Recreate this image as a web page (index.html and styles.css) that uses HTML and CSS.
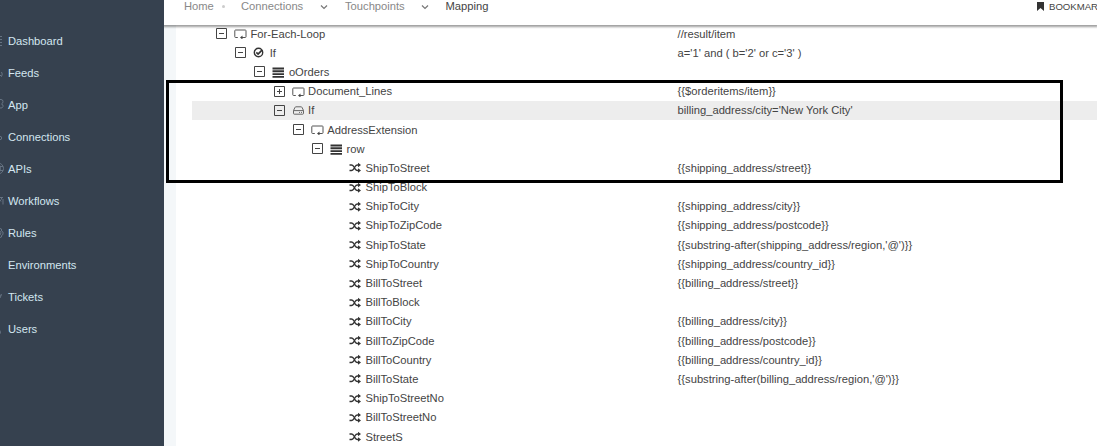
FILE: index.html
```
<!DOCTYPE html>
<html lang="en">
<head>
<meta charset="utf-8">
<title>Mapping</title>
<link rel="stylesheet" href="styles.css">
</head>
<body>
<svg class="defs" width="0" height="0">
  <symbol id="minus" viewBox="0 0 11 11"><path d="M.5.5h10v10H.5zM3 5.5h5" fill="none" stroke="currentColor"/></symbol>
  <symbol id="plus" viewBox="0 0 11 11"><path d="M.5.5h10v10H.5zM3 5.5h5M5.500 3v5" fill="none" stroke="currentColor"/></symbol>
  <symbol id="loop" viewBox="0 0 13 11"><path d="M3.800 9.500H1.500Q.8 9.500.8 8.800V2.700Q.8 2 1.500 2h9.800Q12 2 12 2.700v6.100Q12 9.500 11.300 9.500H7" fill="none" stroke="#555"/><path d="M8.500 7.500v4L6 9.500z" fill="#444"/></symbol>
  <symbol id="check" viewBox="0 0 13 11"><circle cx="5.500" cy="5.500" r="4.200" fill="none" stroke="currentColor" stroke-width="1.400"/><path d="M3.300 5.400l1.800 1.700 3.900-4" fill="none" stroke="currentColor" stroke-width="1.700"/></symbol>
  <symbol id="bars" viewBox="0 0 13 12"><path d="M.5 2.500h11.500M.5 5.300h11.500M.5 8.100h11.500M.5 10.900h11.500" stroke="currentColor" stroke-width="1.900"/></symbol>
  <symbol id="drive" viewBox="0 0 13 11"><path d="M1.500 5.500L3 2.400Q3.200 1.800 4 1.800h5q.8 0 1 .6l1.500 3.100v2.800q0 .9-.7.900H2.200q-.7 0-.7-.9zM1.500 5.600h10M7 7.400h1M9 7.400h1" fill="none" stroke="#666"/></symbol>
  <symbol id="shuffle" viewBox="0 0 13 11"><path d="M.5 3h2Q3.700 3 4.600 4.400l1.600 2.600Q7 8.500 8.500 8.500h1.700M.5 8.500h2Q3.700 8.500 4.600 7.100l1.600-2.600Q7 3 8.500 3h1.700" fill="none" stroke="currentColor" stroke-width="1.400"/><path d="M9 .7l3 2.300-3 2.300zM9 6.200l3 2.300-3 2.300z" fill="currentColor"/></symbol>
</svg>
<div class="app">
  <nav class="sidebar">
    <a class="nav-item"><svg class="nav-icon" viewBox="0 0 4 12"><path d="M0 1.500h2M0 4.500h2M0 7.500h2M0 10.500h2"/></svg>Dashboard</a>
    <a class="nav-item"><svg class="nav-icon" viewBox="0 0 4 12"><path d="M0 8l1.500 1.500Q3 7 1.500 5"/></svg>Feeds</a>
    <a class="nav-item"><svg class="nav-icon" viewBox="0 0 4 12"><path d="M0 .5h1Q3 .5 3 2.500T1.500 5Q3.500 5.500 3 7.500T0 9"/></svg>App</a>
    <a class="nav-item"><svg class="nav-icon" viewBox="0 0 4 12"><circle cx="0" cy="7" r="1.700"/></svg>Connections</a>
    <a class="nav-item"><svg class="nav-icon" viewBox="0 0 4 12"><path d="M-2 0A5.500 5.500 0 0 1-2 11M-2 0Q3 5.500-2 11M-2 3.500h5M-2 7.500h5"/></svg>APIs</a>
    <a class="nav-item"><svg class="nav-icon" viewBox="0 0 4 12"><path d="M0 2.500h3M1.500 2.500v2M3 4v5.500M0 4.500l1 2"/></svg>Workflows</a>
    <a class="nav-item"><svg class="nav-icon" viewBox="0 0 4 12"><path d="M0 1.500l1.500.5v2L3 5v2.500L1.500 8.500V10L0 10.500M0 4q2 1.500 0 4"/></svg>Rules</a>
    <a class="nav-item"><svg class="nav-icon" viewBox="0 0 4 12"></svg>Environments</a>
    <a class="nav-item"><svg class="nav-icon" viewBox="0 0 4 12"><path d="M0 4.500l1.500-1L0 7"/></svg>Tickets</a>
    <a class="nav-item"><svg class="nav-icon" viewBox="0 0 4 12"><path d="M-1 6.500q1.500 1 1.500 4"/></svg>Users</a>
  </nav>
  <main class="main">
    <header class="topbar">
      <span class="crumb home">Home</span><i class="dot"></i>
      <span class="crumb connections">Connections</span><svg class="chevron" viewBox="0 0 8 6"><path d="M1 1.500l3 3 3-3"/></svg>
      <span class="crumb touchpoints">Touchpoints</span><svg class="chevron" viewBox="0 0 8 6"><path d="M1 1.500l3 3 3-3"/></svg>
      <span class="crumb current">Mapping</span>
      <span class="bookmark"><svg viewBox="0 0 7 9"><path d="M0 0h7v9L3.500 6 0 9z"/></svg>BOOKMARKS</span>
    </header>
    <section class="panel">
      <div class="row d0"><div class="node"><svg class="toggle"><use href="#minus"/></svg><svg class="icon"><use href="#loop"/></svg><span>For-Each-Loop</span></div><div>//result/item</div></div>
      <div class="row d1"><div class="node"><svg class="toggle"><use href="#minus"/></svg><svg class="icon"><use href="#check"/></svg><span>If</span></div><div>a='1' and ( b='2' or c='3' )</div></div>
      <div class="row d2"><div class="node"><svg class="toggle"><use href="#minus"/></svg><svg class="icon bars"><use href="#bars"/></svg><span>oOrders</span></div></div>
      <div class="row d3"><div class="node"><svg class="toggle"><use href="#plus"/></svg><svg class="icon"><use href="#loop"/></svg><span>Document_Lines</span></div><div>{{$orderitems/item}}</div></div>
      <div class="row d3 selected"><div class="node"><svg class="toggle"><use href="#minus"/></svg><svg class="icon"><use href="#drive"/></svg><span>If</span></div><div>billing_address/city='New York City'</div></div>
      <div class="row d4"><div class="node"><svg class="toggle"><use href="#minus"/></svg><svg class="icon"><use href="#loop"/></svg><span>AddressExtension</span></div></div>
      <div class="row d5"><div class="node"><svg class="toggle"><use href="#minus"/></svg><svg class="icon bars"><use href="#bars"/></svg><span>row</span></div></div>
      <div class="row leaf"><div class="node"><svg class="icon"><use href="#shuffle"/></svg><span>ShipToStreet</span></div><div>{{shipping_address/street}}</div></div>
      <div class="row leaf"><div class="node"><svg class="icon"><use href="#shuffle"/></svg><span>ShipToBlock</span></div></div>
      <div class="row leaf"><div class="node"><svg class="icon"><use href="#shuffle"/></svg><span>ShipToCity</span></div><div>{{shipping_address/city}}</div></div>
      <div class="row leaf"><div class="node"><svg class="icon"><use href="#shuffle"/></svg><span>ShipToZipCode</span></div><div>{{shipping_address/postcode}}</div></div>
      <div class="row leaf"><div class="node"><svg class="icon"><use href="#shuffle"/></svg><span>ShipToState</span></div><div>{{substring-after(shipping_address/region,'@')}}</div></div>
      <div class="row leaf"><div class="node"><svg class="icon"><use href="#shuffle"/></svg><span>ShipToCountry</span></div><div>{{shipping_address/country_id}}</div></div>
      <div class="row leaf"><div class="node"><svg class="icon"><use href="#shuffle"/></svg><span>BillToStreet</span></div><div>{{billing_address/street}}</div></div>
      <div class="row leaf"><div class="node"><svg class="icon"><use href="#shuffle"/></svg><span>BillToBlock</span></div></div>
      <div class="row leaf"><div class="node"><svg class="icon"><use href="#shuffle"/></svg><span>BillToCity</span></div><div>{{billing_address/city}}</div></div>
      <div class="row leaf"><div class="node"><svg class="icon"><use href="#shuffle"/></svg><span>BillToZipCode</span></div><div>{{billing_address/postcode}}</div></div>
      <div class="row leaf"><div class="node"><svg class="icon"><use href="#shuffle"/></svg><span>BillToCountry</span></div><div>{{billing_address/country_id}}</div></div>
      <div class="row leaf"><div class="node"><svg class="icon"><use href="#shuffle"/></svg><span>BillToState</span></div><div>{{substring-after(billing_address/region,'@')}}</div></div>
      <div class="row leaf"><div class="node"><svg class="icon"><use href="#shuffle"/></svg><span>ShipToStreetNo</span></div></div>
      <div class="row leaf"><div class="node"><svg class="icon"><use href="#shuffle"/></svg><span>BillToStreetNo</span></div></div>
      <div class="row leaf"><div class="node"><svg class="icon"><use href="#shuffle"/></svg><span>StreetS</span></div></div>
    </section>
  </main>
  <div class="highlight-frame"></div>
</div>
</body>
</html>
```
FILE: styles.css
```
* { box-sizing: border-box; }
body {
  margin: 0;
  font-family: "Liberation Sans", Arial, sans-serif;
  font-size: 11.2px;
  color: #444;
}
.defs { display: none; }
.app {
  position: relative;
  display: flex;
  height: 446px;
  overflow: hidden;
}
.sidebar {
  position: relative;
  z-index: 1;
  width: 164px;
  flex: none;
  padding-top: 25px;
  background: #36414f;
}
.nav-item {
  display: flex;
  align-items: center;
  height: 32px;
  color: #d3e6ef;
}
.nav-icon {
  width: 4px;
  height: 12px;
  margin-right: 4px;
  fill: none;
  stroke: #667382;
}
.main {
  flex: 1;
  min-width: 0;
  display: flex;
  flex-direction: column;
  background: #f4f7f9;
}
.topbar {
  position: relative;
  flex: none;
  display: flex;
  align-items: center;
  height: 25px;
  padding: 0 0 13px 20px;
  background: #fff;
  box-shadow: 0 1px 2px 1px rgba(0, 0, 0, .38);
  color: #888;
  white-space: nowrap;
}
.home { width: 38px; }
.dot {
  width: 3px;
  height: 3px;
  border-radius: 50%;
  background: #ccc;
}
.connections { width: 79px; margin-left: 16px; }
.touchpoints { width: 76px; margin-left: 17px; }
.current { margin-left: 16.500px; color: #444; }
.chevron {
  width: 8px;
  height: 6px;
  margin-top: 2px;
  fill: none;
  stroke: #777;
  stroke-width: 1.2;
}
.bookmark {
  display: flex;
  align-items: center;
  gap: 5px;
  width: 60px;
  margin-left: auto;
  font-size: 9.6px;
  overflow: hidden;
  color: #444;
}
.bookmark svg {
  flex: none;
  width: 7px;
  height: 9px;
  fill: #333;
}
.panel {
  flex: 1;
  min-height: 0;
  margin-left: 12px;
  padding-left: 16px;
  background: #fff;
  overflow: hidden;
}
.row {
  display: grid;
  grid-template-columns: 485.600px 1fr;
  align-items: center;
  height: 19.200px;
  white-space: nowrap;
}
.row:first-child { margin-top: -1px; }
.selected { background: #ededed; }
.node { display: flex; align-items: center; }
.toggle {
  width: 11px;
  height: 11px;
  margin-right: 7px;
  color: #444;
}
.icon {
  width: 13px;
  height: 11px;
  margin-right: 3.500px;
  color: #333;
}
.bars { height: 12px; }
.d0 .node { padding-left: 24px; }
.d1 .node { padding-left: 43.200px; }
.d2 .node { padding-left: 62.400px; }
.d3 .node { padding-left: 81.600px; }
.d4 .node { padding-left: 100.800px; }
.d5 .node { padding-left: 120px; }
.leaf .node { padding-left: 157px; }
.highlight-frame {
  position: absolute;
  z-index: 2;
  left: 166px;
  top: 80px;
  width: 897px;
  height: 103px;
  border: 3px solid #000;
}
```
